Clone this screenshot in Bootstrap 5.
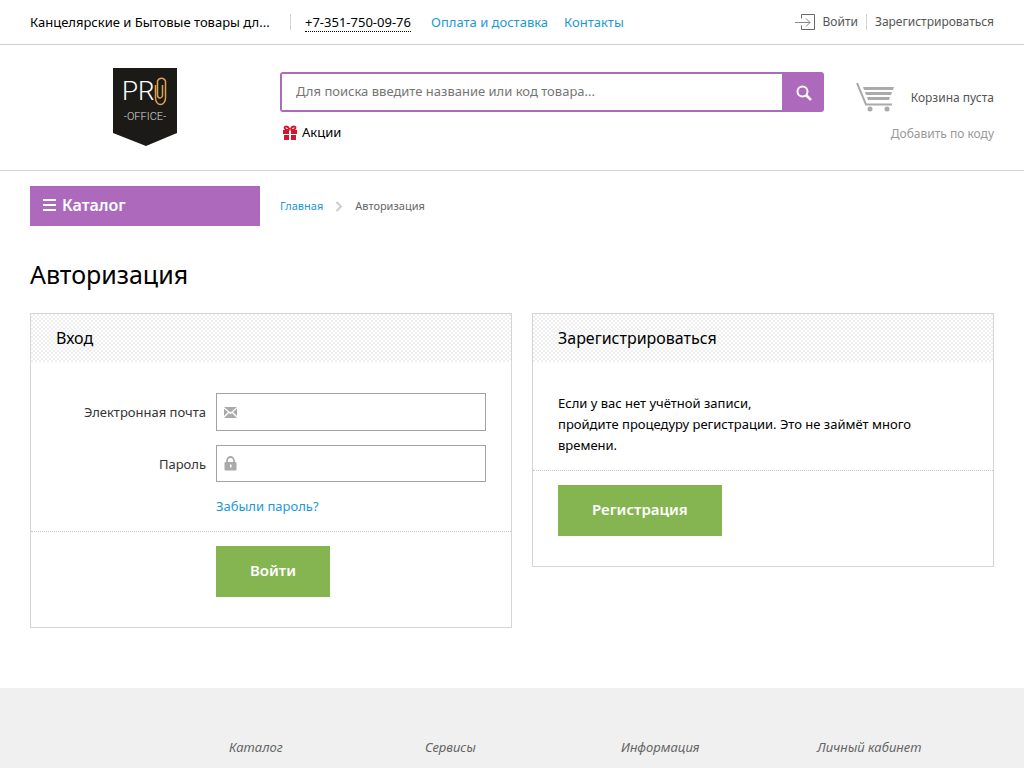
<!DOCTYPE html>
<html lang="ru">
<head>
<meta charset="utf-8">
<meta name="viewport" content="width=device-width, initial-scale=1">
<title>Авторизация</title>
<link href="https://cdn.jsdelivr.net/npm/bootstrap@5.3.0/dist/css/bootstrap.min.css" rel="stylesheet">
<style>
  body { font: 13px/20px "Noto Sans", "Open Sans", sans-serif; color: #000; }
  a { color: #1c99d5; text-decoration: none; }
  a:hover { text-decoration: underline; }
  .wrap { padding: 0 30px; }
  .topbar { height: 45px; border-bottom: 1px solid #d0d0d0; }
  .slogan { width: 245px; white-space: nowrap; }
  .phone { color: #000; border-bottom: 1px dotted #000; display: block; line-height: 18px; }
  .divider { width: 1px; height: 16px; background: #d5d5d5; }
  .split { margin: 0 14px 0 15px; }
  .grey-link { color: #555; font-size: 12px; }
  .pale-link { color: #999; font-size: 12px; margin-top: 12px; }
  .masthead { height: 126px; border-bottom: 1px solid #d5d5d5; }
  .side { flex: 0 0 230px; }
  .logo-link { padding-top: 23px; }
  .search-area { padding-top: 27px; margin: 0 32px 0 20px; }
  .search { height: 40px; border: 2px solid #ad6abc; border-radius: 3px; background: #ad6abc; }
  .search input { border: 0; border-radius: 0; font-size: 13px; padding: 0 14px; color: #333; }
  .search input::placeholder { color: #757575; }
  .search button { flex: 0 0 40px; border: 0; background: #ad6abc; padding: 0 0 2px 3px; }
  .promo { margin: 10px 0 0 3px; gap: 5px; }
  .cart-area { flex: 0 0 138px; padding-top: 38px; }
  .top-row { padding-top: 15px; }
  .catalog-btn { height: 40px; background: #ad6abc; border: 0; color: #fff; font-weight: 600; font-size: 16px; padding: 0 13px 2px; gap: 6px; }
  .crumbs { font-size: 11px; margin-left: 20px; }
  .crumbs span { color: #666; }
  h1 { font-size: 25px; line-height: 34px; margin: 31px 0 22px; font-weight: 400; }
  .panels { display: grid; grid-template-columns: 1fr 1fr; }
  .panel { border: 1px solid #d5d5d5; }
  .reg-panel { margin-left: 20px; }
  .panel-title { margin: 0; font-size: 16px; line-height: 48px; padding: 0 25px; font-weight: 400;
    background: repeating-conic-gradient(#efefef 0 25%, #fff 0 50%) 0 0 / 4px 4px; }
  .fields { display: grid; grid-template-columns: 150px 1fr; column-gap: 10px; row-gap: 14px; padding: 31px 25px 15px; }
  .fields label { text-align: right; color: #333; align-self: center; }
  .field { position: relative; }
  .field svg { position: absolute; left: 8px; top: 11px; }
  .field input { height: 38px; border: 1px solid #a3a3a3; border-radius: 0; padding: 0 10px 0 32px; font-size: 13px; }
  .field input[type=password] { height: 37px; }
  .actions { border-top: 1px dotted #c8c8c8; padding: 14px 25px 30px; }
  .login-actions { padding-left: 185px; }
  .go { background: #85b550; color: #fff; border: 0; border-radius: 0; font-size: 15px; font-weight: 600; line-height: 49px; padding: 0 34px 2px; }
  .go:hover { background: #79a747; color: #fff; }
  .intro { line-height: 21px; padding: 31px 60px 14px 25px; margin: 0; }
  footer { background: #f0f0f0; margin-top: 60px; min-height: 80px; padding-top: 49px; }
  .foot-grid { display: grid; grid-template-columns: 180px repeat(4, 1fr); column-gap: 19px; font-style: italic; color: #666; }
</style>
</head>
<body>
<div class="topbar wrap d-flex align-items-center">
  <span class="slogan">Канцелярские и Бытовые товары дл...</span>
  <span class="divider split"></span>
  <a class="phone" href="tel:+73517500976">+7-351-750-09-76</a>
  <nav class="d-flex gap-3 ps-3 ms-1">
    <a href="#">Оплата и доставка</a>
    <a href="#">Контакты</a>
  </nav>
  <div class="d-flex align-items-center ms-auto">
    <a class="grey-link d-flex align-items-center gap-2" href="#">
      <svg width="20" height="17" viewBox="0 0 20 17" fill="none" stroke="#666"><path d="M6.500 4.500V.5h13v15h-13v-4"/><path d="M0 8.500h15M11 4.500l4 4-4 4" stroke="#888"/></svg>
      <span>Войти</span>
    </a>
    <span class="divider mx-2"></span>
    <a class="grey-link" href="#">Зарегистрироваться</a>
  </div>
</div>

<header class="masthead wrap d-flex">
  <a class="side logo-link" href="#" aria-label="PRO Office">
    <svg width="64" height="78" viewBox="0 0 64 78" class="d-block mx-auto">
      <path d="M0 0h64v65L33 78 0 65z" fill="#1b1a17"/>
      <text x="9" y="32" font-family="Roboto, sans-serif" font-weight="300" font-size="26" fill="#fff">PR</text>
      <path d="M42.500 17v13a5 6.500 0 0 0 10 0V13a4.500 5 0 0 0-8 0v14a2.500 3 0 0 0 5 0V17" fill="none" stroke="#dba351" stroke-width="1.500"/>
      <text x="32" y="52" text-anchor="middle" font-family="Roboto, sans-serif" font-weight="300" font-size="11" fill="#ddd">-OFFICE-</text>
    </svg>
  </a>
  <div class="flex-grow-1 search-area">
    <form class="search d-flex" role="search">
      <input class="form-control shadow-none" type="search" aria-label="Поиск" placeholder="Для поиска введите название или код товара...">
      <button type="button" aria-label="Найти">
        <svg width="16" height="16" viewBox="0 0 16 16" fill="none" stroke="#fff" stroke-width="2"><circle cx="6.500" cy="6.500" r="5"/><path d="M10 10l5 5" stroke-width="2.500"/></svg>
      </button>
    </form>
    <a class="text-black d-inline-flex align-items-center promo" href="#">
      <svg width="14" height="15" viewBox="0 0 14 15"><path d="M0 5h6v4H0zM8 5h6v4H8zM1 10h5v5H1zM8 10h5v5H8z" fill="#d8142c"/><path d="M6.500 5C4 5 1.500 4.500 1.500 2.800S5 .5 6.500 4.500M7.500 5c2.500 0 5-.5 5-2.200S9 .5 7.500 4.500" fill="none" stroke="#d8142c" stroke-width="1.800"/></svg>
      <span>Акции</span>
    </a>
  </div>
  <div class="cart-area d-flex flex-column align-items-end">
    <a class="grey-link d-flex align-items-center justify-content-between w-100" href="#">
      <svg width="38" height="29" viewBox="0 0 38 29"><g fill="#aaa"><path d="M7 4h31l-1 3H8zM9 9h27l-1 3H10zM11 14h23l-1 3H12z"/><circle cx="14" cy="26" r="2.500"/><circle cx="31" cy="26" r="2.500"/></g><path d="M1 0l9 21.500h26" fill="none" stroke="#aaa" stroke-width="2"/></svg>
      <span>Корзина пуста</span>
    </a>
    <a class="pale-link" href="#">Добавить по коду</a>
  </div>
</header>

<main class="wrap">
  <div class="d-flex align-items-center top-row">
    <button class="side catalog-btn d-flex align-items-center" type="button">
      <svg width="13" height="12" viewBox="0 0 13 12" fill="#fff"><path d="M0 0h13v2H0zM0 5h13v2H0zM0 10h13v2H0z"/></svg>
      Каталог
    </button>
    <nav class="crumbs d-flex align-items-center gap-2" aria-label="Навигация">
      <a href="#">Главная</a>
      <svg class="mx-1" width="8" height="11" viewBox="0 0 8 11" fill="none" stroke="#ccc" stroke-width="2"><path d="M1.500 1L6 5.500 1.500 10"/></svg>
      <span>Авторизация</span>
    </nav>
  </div>
  <h1>Авторизация</h1>
  <div class="panels align-items-start">
    <section class="panel">
      <h2 class="panel-title">Вход</h2>
      <form>
        <div class="fields">
          <label for="mail">Электронная почта</label>
          <div class="field">
            <input class="form-control shadow-none" id="mail" type="email">
            <svg width="13" height="15" viewBox="0 0 13 15" fill="#aaa"><path d="M0 3h13L6.500 8.500zM0 4.500l4 3.500-4 4zM13 4.500L9 8l4 4zM0 14l5-5 1.500 1.200L8 9l5 5z"/></svg>
          </div>
          <label for="pass">Пароль</label>
          <div class="field">
            <input class="form-control shadow-none" id="pass" type="password">
            <svg width="13" height="15" viewBox="0 0 13 15"><path d="M3 8V4.500a3.500 3.500 0 0 1 7 0V8" fill="none" stroke="#aaa" stroke-width="1.800"/><rect y="6" x=".5" width="12" height="8.500" rx="1" fill="#aaa"/><path d="M6 8.500h1.500v3H6z" fill="#fff"/></svg>
          </div>
          <span></span>
          <a href="#">Забыли пароль?</a>
        </div>
        <div class="actions login-actions"><button class="btn go" type="button">Войти</button></div>
      </form>
    </section>
    <section class="panel reg-panel">
      <h2 class="panel-title">Зарегистрироваться</h2>
      <p class="intro">Если у вас нет учётной записи,<br>пройдите процедуру регистрации. Это не займёт много времени.</p>
      <div class="actions"><button class="btn go" type="button">Регистрация</button></div>
    </section>
  </div>
</main>

<footer>
  <div class="wrap foot-grid">
    <span></span><span>Каталог</span><span>Сервисы</span><span>Информация</span><span>Личный кабинет</span>
  </div>
</footer>
<script src="https://cdn.jsdelivr.net/npm/bootstrap@5.3.0/dist/js/bootstrap.bundle.min.js"></script>
</body>
</html>
